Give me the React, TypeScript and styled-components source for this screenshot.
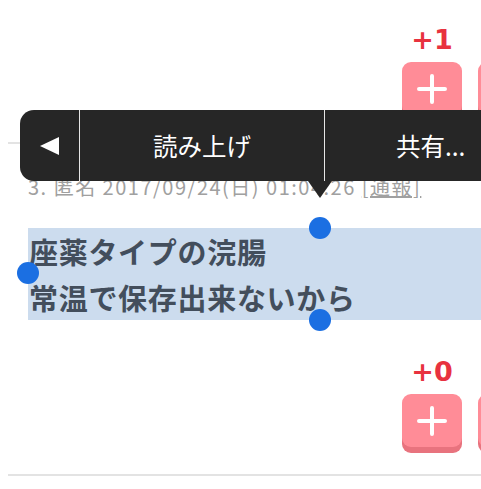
import React from 'react';
import styled, { createGlobalStyle } from 'styled-components';

const GlobalStyle = createGlobalStyle`
  html, body {
    margin: 0;
    padding: 0;
    background: #ffffff;
    overflow: hidden;
  }
  body {
    font-family: "Noto Sans CJK JP", "Noto Sans", sans-serif;
  }
`;

const Page = styled.main`
  position: relative;
  width: 481px;
  height: 489px;
  padding: 25px 0 0 8px;
  box-sizing: border-box;
  overflow: hidden;
`;

const VoteRow = styled.div<{ $gap?: number }>`
  display: flex;
  justify-content: flex-end;
  align-items: flex-end;
  gap: 16px;
  margin-right: -57px;
  margin-top: ${(p) => p.$gap ?? 0}px;
`;

const VoteCol = styled.div`
  display: flex;
  flex-direction: column;
  align-items: center;
  gap: 7px;
`;

const Score = styled.span`
  font-family: "DejaVu Sans", sans-serif;
  font-size: 27px;
  font-weight: 700;
  line-height: 30px;
  color: #e8323f;
`;

const VoteButton = styled.button`
  display: flex;
  align-items: center;
  justify-content: center;
  width: 60px;
  height: 53px;
  margin-bottom: 6px;
  padding: 0;
  border: none;
  border-radius: 9px;
  background: #ff8c97;
  box-shadow: 0 6px 0 #e8737e;
`;

const Divider = styled.hr`
  height: 2px;
  margin: 21px 0 0;
  border: none;
  background: #e3e3e3;
`;

const Comment = styled.article`
  padding: 31px 0 0 20px;
`;

const Meta = styled.p`
  margin: 0;
  font-size: 20px;
  line-height: 24px;
  letter-spacing: 1.5px;
  color: #a0a0a0;
  white-space: nowrap;
`;

const Report = styled.a`
  color: #a0a0a0;
  text-decoration: underline;
`;

const Body = styled.p`
  margin: 29px 0 0;
  padding-left: 1px;
  background: #ccdcee;
  font-size: 29px;
  font-weight: 700;
  line-height: 46px;
  letter-spacing: 0.7px;
  color: #434e5c;
  white-space: nowrap;
`;

const Menu = styled.nav`
  position: absolute;
  top: 110px;
  left: 20px;
  width: 640px;
  height: 71px;
  display: flex;
  border-radius: 14px;
  background: #262626;
`;

const MenuItem = styled.div<{ $pad: number }>`
  display: flex;
  flex-shrink: 0;
  align-items: center;
  justify-content: center;
  padding: 0 ${(p) => p.$pad}px;
  font-size: 24.5px;
  color: #ffffff;
  white-space: nowrap;
  & + & {
    border-left: 1px solid #e6e6e6;
  }
`;

const Pointer = styled.span`
  position: absolute;
  top: 100%;
  left: 288px;
  width: 0;
  height: 0;
  border-left: 12px solid transparent;
  border-right: 12px solid transparent;
  border-top: 17px solid #262626;
`;

const Handle = styled.span<{ $x: number; $y: number }>`
  position: absolute;
  left: ${(p) => p.$x - 11}px;
  top: ${(p) => p.$y - 11}px;
  width: 22px;
  height: 22px;
  border-radius: 50%;
  background: #1b6fe2;
`;

const Plus = () => (
  <svg width="30" height="30" viewBox="0 0 30 30">
    <path d="M15 2v26M2 15h26" stroke="#fff" strokeWidth="4" strokeLinecap="round" />
  </svg>
);

const Minus = () => (
  <svg width="30" height="30" viewBox="0 0 30 30">
    <path d="M2 15h26" stroke="#fff" strokeWidth="4" strokeLinecap="round" />
  </svg>
);

const Votes = ({ score, gap }: { score: string; gap?: number }) => (
  <VoteRow $gap={gap}>
    <VoteCol>
      <Score>{score}</Score>
      <VoteButton aria-label="plus">
        <Plus />
      </VoteButton>
    </VoteCol>
    <VoteButton aria-label="minus">
      <Minus />
    </VoteButton>
  </VoteRow>
);

const BackIcon = () => (
  <svg width="21" height="20" viewBox="0 0 21 20">
    <path d="M1 10L20 1v18z" fill="#fff" />
  </svg>
);

export default function App() {
  return (
    <>
      <GlobalStyle />
      <Page>
        <Votes score="+1" />
        <Divider />
        <Comment>
          <Meta>
            3. 匿名 2017/09/24(日) 01:04:26 <Report>[通報]</Report>
          </Meta>
          <Body>
            座薬タイプの浣腸
            <br />
            常温で保存出来ないから
          </Body>
          <Votes score="+0" gap={37} />
        </Comment>
        <Divider />

        <Menu>
          <MenuItem $pad={19}>
            <BackIcon />
          </MenuItem>
          <MenuItem $pad={73}>読み上げ</MenuItem>
          <MenuItem $pad={71}>共有...</MenuItem>
          <Pointer />
        </Menu>
        <Handle $x={320} $y={228} />
        <Handle $x={28} $y={273} />
        <Handle $x={320} $y={320} />
      </Page>
    </>
  );
}
